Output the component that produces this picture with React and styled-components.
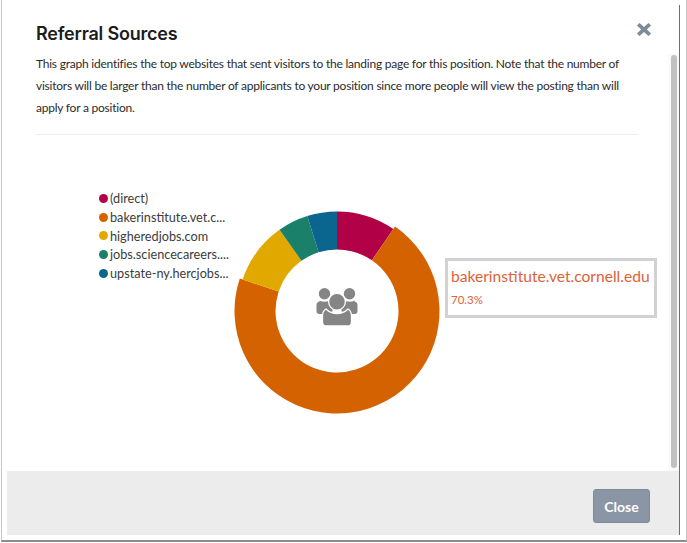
import React from 'react';
import styled, { createGlobalStyle } from 'styled-components';

const slices = [
  { name: '(direct)', color: '#b20047', from: 0, to: 34.5, r: 99.5 },
  { name: 'bakerinstitute.vet.c...', color: '#d56200', from: 34.5, to: 288.5, r: 102.5 },
  { name: 'higheredjobs.com', color: '#e1a900', from: 288.5, to: 324.7, r: 99.5 },
  { name: 'jobs.sciencecareers....', color: '#1a8069', from: 324.7, to: 342.6, r: 99.5 },
  { name: 'upstate-ny.hercjobs...', color: '#0a668e', from: 342.6, to: 360, r: 99.5 },
];

const point = (r, deg) => {
  const a = (deg * Math.PI) / 180;
  return `${(105 + r * Math.sin(a)).toFixed(2)} ${(105 - r * Math.cos(a)).toFixed(2)}`;
};

const slicePath = ({ from, to, r }) => {
  const inner = 61.5;
  const large = to - from > 180 ? 1 : 0;
  return `M${point(r, from)}A${r} ${r} 0 ${large} 1 ${point(r, to)}L${point(inner, to)}A${inner} ${inner} 0 ${large} 0 ${point(inner, from)}Z`;
};

const sideBody = 'M87.5 94.5c1.500 .8 3 1.200 5 1.200s3.500-.4 5-1.200l3 2v9l-6 1.500c-.6 0-1.500 .5-2 1h-5c-2 0-3-1.300-3-3v-6c0-1.700 1-3 3-3.500z';

export default function App() {
  return (
    <>
      <GlobalStyle />
      <Frame>
        <Modal>
          <Body>
            <TitleRow>
              <Title>Referral Sources</Title>
              <CloseIcon viewBox="0 0 16 16">
                <path d="M3.200 1 8 5.400 12.800 1l2.700 2.800L11.100 8l4.400 4.200-2.700 2.800L8 10.600 3.200 15 .5 12.200 4.900 8 .5 3.800z" />
              </CloseIcon>
            </TitleRow>
            <Description>
              This graph identifies the top websites that sent visitors to the landing page for this position. Note that
              the number of visitors will be larger than the number of applicants to your position since more people will
              view the posting than will apply for a position.
            </Description>
            <Divider />
            <ChartArea>
              <Legend>
                {slices.map(s => (
                  <LegendRow key={s.name}>
                    <Dot $color={s.color} />
                    {s.name}
                  </LegendRow>
                ))}
              </Legend>
              <Donut viewBox="0 0 210 210">
                {slices.map(s => (
                  <path key={s.name} d={slicePath(s)} fill={s.color} />
                ))}
                <g fill="#858585">
                  <circle cx="92.500" cy="87.700" r="5.700" />
                  <circle cx="117.500" cy="87.700" r="5.700" />
                  <path d={sideBody} />
                  <path d={sideBody} transform="matrix(-1 0 0 1 210 0)" />
                  <g stroke="#fff" strokeWidth="1.300">
                    <circle cx="105" cy="95.700" r="8.400" />
                    <path d="M94 103c3 3 7 4.500 11 4.500s8-1.500 11-4.500c2.500 1.500 3.500 4 3.500 7v6c0 2.500-1.500 4-4 4h-21c-2.500 0-4-1.500-4-4v-6c0-3 1-5.500 3.500-7z" />
                  </g>
                </g>
              </Donut>
              <Tooltip>
                <TooltipName>bakerinstitute.vet.cornell.edu</TooltipName>
                <TooltipValue>70.3%</TooltipValue>
              </Tooltip>
            </ChartArea>
          </Body>
          <Footer>
            <CloseButton>Close</CloseButton>
          </Footer>
          <ScrollTrack>
            <ScrollThumb />
          </ScrollTrack>
        </Modal>
      </Frame>
    </>
  );
}

const GlobalStyle = createGlobalStyle`
  html, body {
    margin: 0;
    height: 100%;
    background: #fff;
  }
  body {
    font-family: 'Lato', sans-serif;
    overflow: hidden;
  }
`;

const Frame = styled.div`
  box-sizing: border-box;
  width: 686px;
  height: 542px;
  margin-left: 1px;
  padding-top: 5px;
  border-left: 1px solid #c4c4c4;
  border-right: 1px solid #c4c4c4;
  border-bottom: 2px solid #8c8c8c;
  background: #fff;
`;

const Modal = styled.div`
  position: relative;
  box-sizing: border-box;
  display: flex;
  flex-direction: column;
  width: 678px;
  height: 530px;
  padding-left: 5px;
  border-right: 1px solid #6e6e6e;
`;

const Body = styled.div`
  flex: 1;
  width: 602px;
  padding: 16px 0 0 29px;
`;

const TitleRow = styled.div`
  display: flex;
  justify-content: space-between;
  align-items: flex-start;
  height: 32px;
`;

const Title = styled.h1`
  margin: 0;
  font-family: 'Inter', sans-serif;
  font-size: 18px;
  line-height: 26px;
  font-weight: 600;
  letter-spacing: -0.2px;
  color: #1c1c1c;
`;

const CloseIcon = styled.svg`
  width: 16px;
  height: 15px;
  margin: 1px -14px 0 0;
  fill: #7d8a9c;
`;

const Description = styled.p`
  margin: 0;
  font-size: 12px;
  line-height: 22px;
  letter-spacing: -0.23px;
  color: #2b2b2b;
`;

const Divider = styled.hr`
  margin: 15px 0 0;
  border: 0;
  border-top: 1px solid #efefef;
`;

const ChartArea = styled.div`
  position: relative;
  display: flex;
  align-items: flex-start;
  padding: 50px 0 0 63px;
`;

const Legend = styled.ul`
  width: 133px;
  margin: 4px 0 0;
  padding: 0;
  list-style: none;
`;

const LegendRow = styled.li`
  display: flex;
  align-items: center;
  gap: 2px;
  height: 18.7px;
  font-size: 12.7px;
  color: #3c3c3c;
  white-space: nowrap;
`;

const Dot = styled.span`
  width: 9px;
  height: 9px;
  border-radius: 50%;
  background: ${p => p.$color};
`;

const Donut = styled.svg`
  flex: none;
  width: 210px;
  height: 210px;
  margin-top: 21px;
`;

const Tooltip = styled.div`
  position: absolute;
  left: 409px;
  top: 123px;
  box-sizing: border-box;
  width: 212px;
  height: 60px;
  padding: 5px 0 0 3px;
  border: 3px solid #d2d2d2;
  background: #fff;
  color: #dd6238;
  white-space: nowrap;
`;

const TooltipName = styled.div`
  font-size: 15.6px;
  line-height: 20px;
`;

const TooltipValue = styled.div`
  margin-top: 7px;
  font-size: 11.5px;
  line-height: 14px;
`;

const Footer = styled.footer`
  display: flex;
  justify-content: flex-end;
  align-items: flex-start;
  box-sizing: border-box;
  height: 64px;
  padding: 18px 29px 0 0;
  background: #ececec;
`;

const CloseButton = styled.button`
  width: 57px;
  height: 34px;
  padding: 0;
  border: 1px solid #7f8b9b;
  border-radius: 3px;
  background: #8a95a5;
  color: #fff;
  font-family: 'Lato', sans-serif;
  font-size: 14px;
  font-weight: 700;
`;

const ScrollTrack = styled.div`
  position: absolute;
  right: 0;
  top: 49px;
  box-sizing: border-box;
  width: 11px;
  height: 417px;
  padding: 1px 2px 0 3px;
  background: #fafafa;
`;

const ScrollThumb = styled.div`
  height: 413px;
  border-radius: 4px;
  background: #c1c1c1;
`;
